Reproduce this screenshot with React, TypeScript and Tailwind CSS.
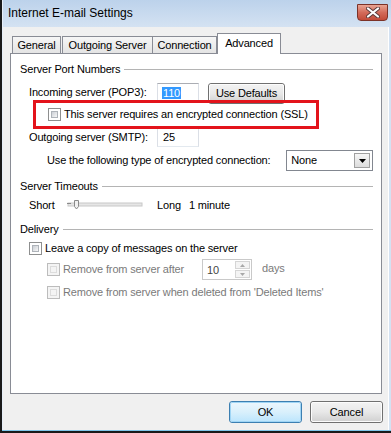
import React from 'react';

const FONT = { fontFamily: '"Liberation Sans", Arial, sans-serif' };

function Check({ disabled }: { disabled?: boolean }) {
  return (
    <div className={'w-[13px] h-[13px] shrink-0 border p-[2px] ' + (disabled ? 'border-[#bcbcbc] bg-[#f4f4f4]' : 'border-[#8e8f8f] bg-white')}>
      <div className={'w-full h-full border ' + (disabled ? 'border-[#dcdcdc] bg-[#f4f4f4]' : 'border-[#aeb3b9] bg-gradient-to-br from-[#cbcfd5] to-[#f7f7f7]')} />
    </div>
  );
}

function Btn({ children, focused, className }: { children: React.ReactNode; focused?: boolean; className?: string }) {
  return (
    <div className={'relative rounded-[3px] border overflow-hidden flex items-center justify-center ' + (focused ? 'border-[#3c7fb1]' : 'border-[#707070]') + ' ' + (className || '')}>
      <div className={'absolute inset-0 rounded-[2px] border ' + (focused ? 'border-[#9fd5f5] bg-gradient-to-b from-[#eaf6fd] via-[#d9f0fc] to-[#bee6fd]' : 'border-[#fcfcfc] bg-gradient-to-b from-[#f2f2f2] via-[#e8e8e8] to-[#d2d2d2]')} />
      <span className="relative text-black">{children}</span>
    </div>
  );
}

function Group({ title }: { title: string }) {
  return (
    <div className="flex items-center h-[14px]">
      <span className="text-black whitespace-nowrap">{title}</span>
      <div className="flex-1 ml-[4px] h-0 border-t border-[#b4b4b4]" />
    </div>
  );
}

function TextBox({ children, w }: { children: React.ReactNode; w: string }) {
  return (
    <div className={'h-[19px] border border-[#abadb3] border-b-[#e3e9ef] border-x-[#dbdfe6] bg-white flex items-center ' + w}>
      {children}
    </div>
  );
}

export default function App() {
  return (
    <div className="relative w-[391px] h-[433px] overflow-hidden bg-[#c9daee] border-l-2 border-[#1a1a1a] text-[11px] leading-[13px] tracking-[-0.15px] select-none" style={FONT}>
      {/* title bar */}
      <div className="h-[27px] flex items-center bg-gradient-to-b from-[#bcd2eb] to-[#d4e2f2] border-l border-[#e6eef8]">
        <span className="ml-[5px] text-[12px] tracking-normal text-black">Internet E-mail Settings</span>
        <div className="ml-auto mr-[3px] mb-[3px] w-[31px] h-[17px] rounded-b-[4px] border border-[#7c3228] bg-gradient-to-b from-[#e8a494] via-[#d36b5a] to-[#c24b39] flex items-center justify-center">
          <svg width="14" height="11" viewBox="0 0 14 11">
            <path d="M2 1.5 L12 9.5 M12 1.5 L2 9.5" stroke="#5b3a3a" strokeWidth="4" strokeLinecap="round" />
            <path d="M2 1.5 L12 9.5 M12 1.5 L2 9.5" stroke="#ffffff" strokeWidth="2.2" strokeLinecap="round" />
          </svg>
        </div>
      </div>

      {/* client area */}
      <div className="flex h-[403px]">
        <div className="w-px bg-[#e6eef8]" />
        <div className="w-[385px] bg-[#f0f0f0] flex flex-col">
          {/* tabs */}
          <div className="flex items-end h-[26px] pt-[6px] pl-[9px]">
            <div className="w-[49px] h-[17px] border border-b-0 border-[#898c95] bg-gradient-to-b from-[#f6f6f6] to-[#e4e4e4] flex items-center justify-center">General</div>
            <div className="ml-[1px] w-[91px] h-[17px] border border-b-0 border-[#898c95] bg-gradient-to-b from-[#f6f6f6] to-[#e4e4e4] flex items-center justify-center">Outgoing Server</div>
            <div className="w-[64px] h-[17px] border border-b-0 border-l-0 border-[#898c95] bg-gradient-to-b from-[#f6f6f6] to-[#e4e4e4] flex items-center justify-center">Connection</div>
            <div className="relative z-10 -mb-px w-[64px] h-[21px] border border-b-0 border-[#898c95] bg-white flex items-center justify-center pb-[1px]">Advanced</div>
          </div>

          {/* panel */}
          <div className="ml-[7px] w-[372px] h-[341px] border border-[#898c95] bg-white pl-[9px] pr-[8px] pt-[8px] text-black">
            <Group title="Server Port Numbers" />

            <div className="flex items-start h-[21px] mt-[7px] ml-[9px]">
              <div className="w-[128px] h-[19px] flex items-center">Incoming server (POP3):</div>
              <TextBox w="w-[42px]">
                <span className="ml-[4px] px-px bg-[#3399ff] text-white leading-[12px]">110</span>
              </TextBox>
              <Btn className="ml-[9px] w-[77px] h-[21px]">Use Defaults</Btn>
            </div>

            <div className="flex items-center h-[21px] ml-[28px]">
              <Check />
              <span className="ml-[3px]">This server requires an encrypted connection (SSL)</span>
            </div>

            <div className="flex items-center h-[19px] mt-[3px] ml-[9px]">
              <div className="w-[128px]">Outgoing server (SMTP):</div>
              <TextBox w="w-[42px]">
                <span className="ml-[5px]">25</span>
              </TextBox>
            </div>

            <div className="flex items-center h-[21px] mt-[3px] ml-[27px]">
              <div className="w-[240px]">Use the following type of encrypted connection:</div>
              <div className="w-[87px] h-[21px] border border-[#828790] bg-white flex items-center pr-[2px]">
                <span className="ml-[4px]">None</span>
                <div className="ml-auto w-[16px] h-[15px] border border-[#a0a0a0] bg-gradient-to-b from-[#f6f6f6] to-[#dcdcdc] flex items-center justify-center">
                  <svg width="7" height="4" viewBox="0 0 7 4"><path d="M0 0 H7 L3.5 4 Z" fill="#000" /></svg>
                </div>
              </div>
            </div>

            <div className="mt-[8px]">
              <Group title="Server Timeouts" />
            </div>

            <div className="flex items-center h-[16px] mt-[4px] ml-[9px]">
              <span className="w-[38px]">Short</span>
              <svg width="76" height="12" viewBox="0 0 76 12" className="shrink-0">
                <rect x="1" y="4" width="74" height="3" fill="#e6e6e6" stroke="#c8c8c8" strokeWidth="1" />
                <rect x="0" y="4" width="4" height="1" fill="#8a8a8a" />
                <path d="M7.5 1.5 H11.5 V7.5 L9.5 10 L7.5 7.5 Z" fill="#f0f0f0" stroke="#8a8a8a" strokeWidth="1" />
              </svg>
              <span className="ml-[14px]">Long</span>
              <span className="ml-[8px]">1 minute</span>
            </div>

            <div className="mt-[9px]">
              <Group title="Delivery" />
            </div>

            <div className="flex items-center h-[16px] mt-[4px] ml-[9px]">
              <Check />
              <span className="ml-[3px]">Leave a copy of messages on the server</span>
            </div>

            <div className="flex items-center h-[21px] mt-[3px] ml-[27px] text-[#7a7a7a]">
              <Check disabled />
              <span className="ml-[3px] w-[139px]">Remove from server after</span>
              <div className="w-[50px] h-[21px] border border-[#c9c9c9] bg-white flex items-center pr-px">
                <span className="ml-[4px] mt-[2px] text-[#444]">10</span>
                <div className="ml-auto w-[15px] h-[17px] flex flex-col gap-px">
                  <div className="flex-1 border border-[#d5d5d5] bg-[#f4f4f4] flex items-center justify-center">
                    <svg width="5" height="3" viewBox="0 0 5 3"><path d="M0 3 H5 L2.5 0 Z" fill="#a8a8a8" /></svg>
                  </div>
                  <div className="flex-1 border border-[#d5d5d5] bg-[#f4f4f4] flex items-center justify-center">
                    <svg width="5" height="3" viewBox="0 0 5 3"><path d="M0 0 H5 L2.5 3 Z" fill="#a8a8a8" /></svg>
                  </div>
                </div>
              </div>
              <span className="ml-[10px] -mt-[3px]">days</span>
            </div>

            <div className="flex items-center h-[16px] mt-[4px] ml-[27px] text-[#7a7a7a]">
              <Check disabled />
              <span className="ml-[3px]">Remove from server when deleted from 'Deleted Items'</span>
            </div>
          </div>

          {/* buttons */}
          <div className="flex justify-end gap-[8px] mt-[7px] pr-[5px]">
            <Btn focused className="w-[73px] h-[22px]">OK</Btn>
            <Btn className="w-[73px] h-[22px]">Cancel</Btn>
          </div>
        </div>
        <div className="w-[3px] bg-[#d4e2f2] border-l border-[#ffffff]" />
      </div>
      <div className="h-px bg-[#7fc6ea]" />
      <div className="h-[2px] bg-[#1a1a1a]" />

      {/* red annotation */}
      <div className="absolute left-[31px] top-[100px] w-[286px] h-[29px] border-[3px] border-[#e3131b]" />
    </div>
  );
}
